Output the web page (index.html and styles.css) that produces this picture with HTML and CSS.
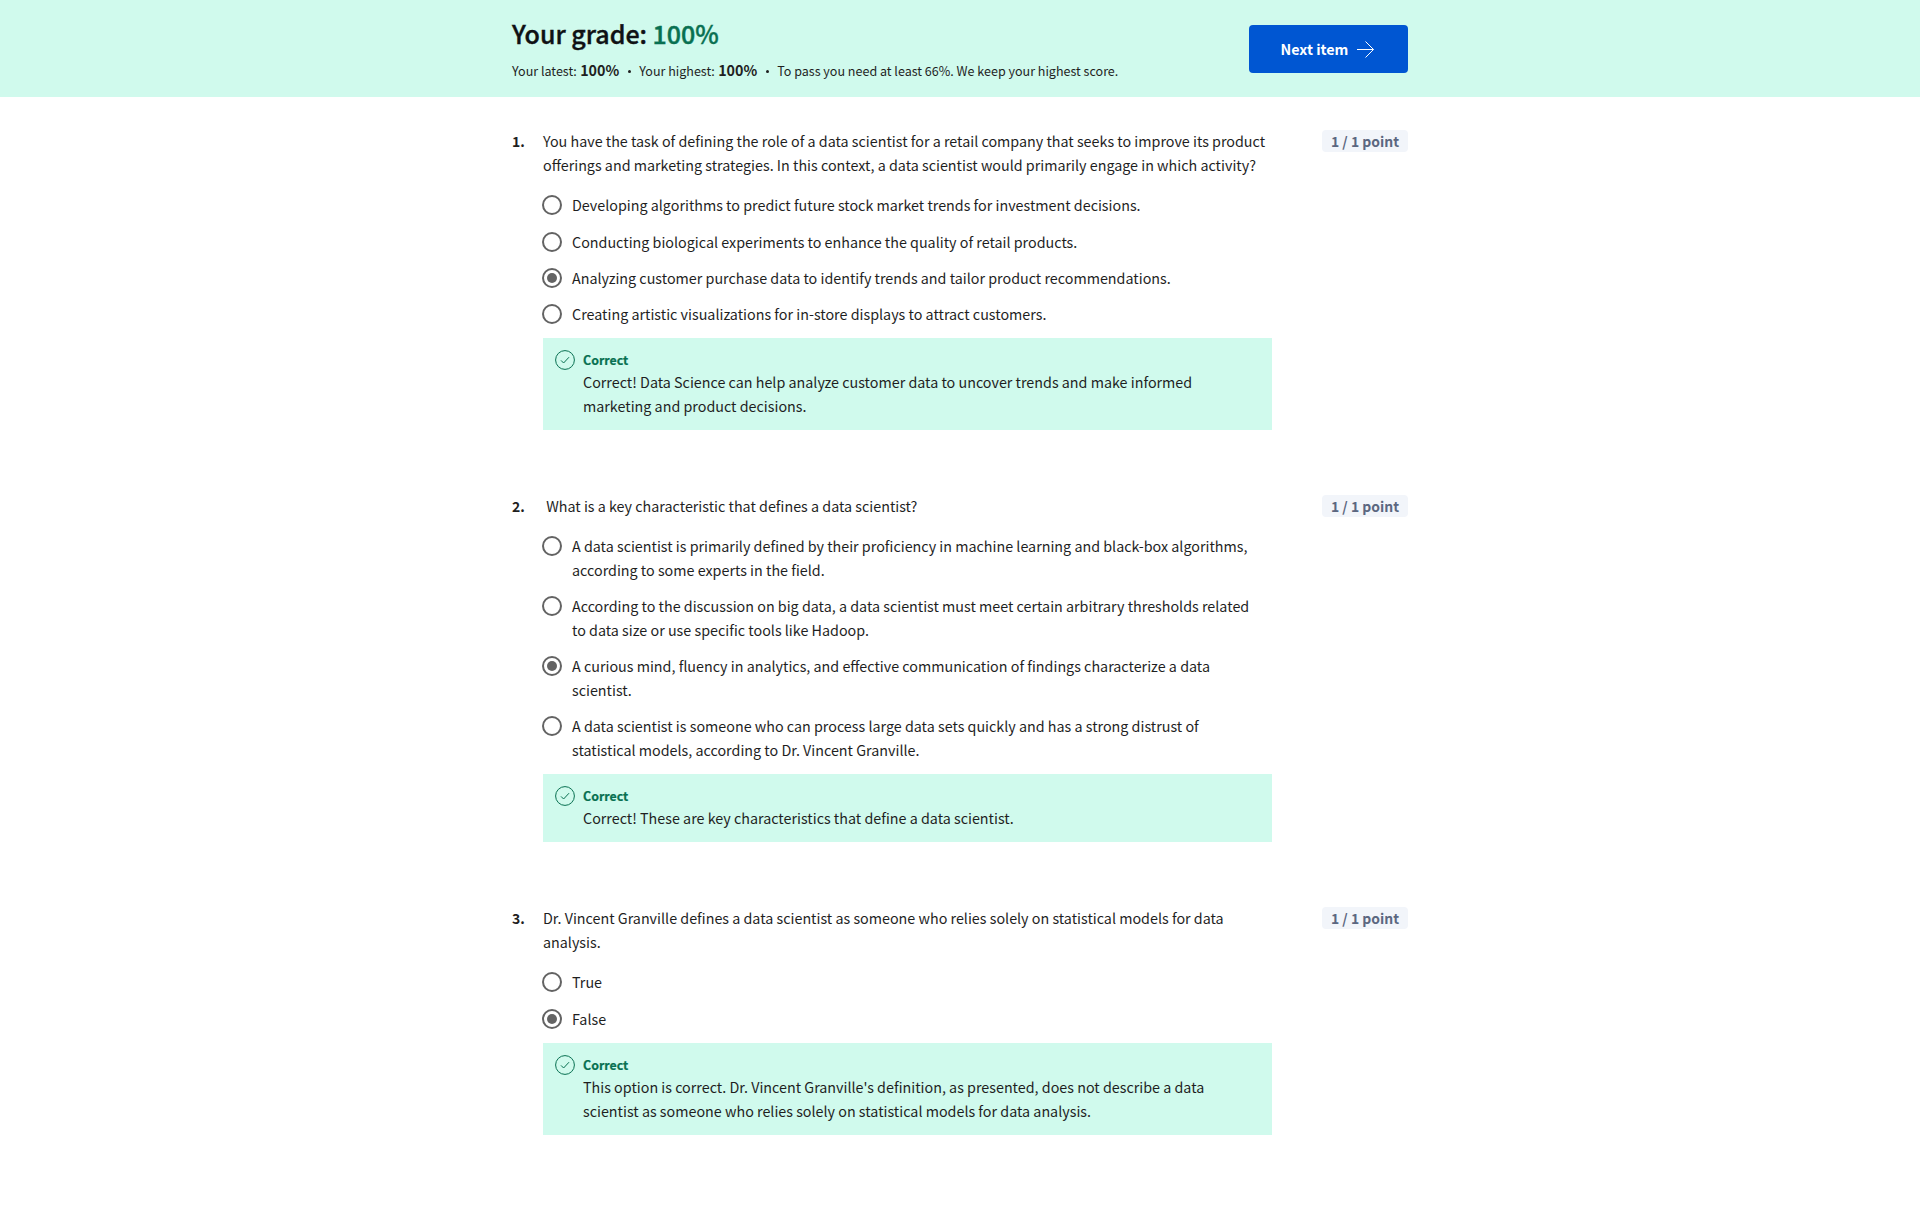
FILE: index.html
```
<!DOCTYPE html>
<html lang="en">
<head>
<meta charset="utf-8">
<title>Quiz results</title>
<link rel="stylesheet" href="styles.css">
</head>
<body>
<svg class="defs" aria-hidden="true">
  <symbol id="check" viewBox="0 0 20 20">
    <circle cx="10" cy="10" r="9.4"/>
    <path d="M6 10.4 8.6 13 14 7.2"/>
  </symbol>
</svg>
<header class="banner">
  <div class="banner-inner">
    <div>
      <h1 class="grade">Your grade: <span class="grade-value">100%</span></h1>
      <p class="summary">
        <span>Your latest: <b>100%</b></span><i class="dot"></i>
        <span>Your highest: <b>100%</b></span><i class="dot"></i>
        <span>To pass you need at least 66%. We keep your highest score.</span>
      </p>
    </div>
    <button class="next">Next item
      <svg class="arrow" viewBox="0 0 17 17"><path d="M0 8.5h16.5M8.5 .5l8 8-8 8"/></svg>
    </button>
  </div>
</header>
<main class="questions">
  <section class="question">
    <div class="number">1.</div>
    <div class="content">
      <p class="prompt">You have the task of defining the role of a data scientist for a retail company that seeks to improve its product<br>offerings and marketing strategies. In this context, a data scientist would primarily engage in which activity?</p>
      <ul class="options">
        <li class="option lead"><span class="radio"></span><span>Developing algorithms to predict future stock market trends for investment decisions.</span></li>
        <li class="option"><span class="radio"></span><span>Conducting biological experiments to enhance the quality of retail products.</span></li>
        <li class="option"><span class="radio selected"></span><span>Analyzing customer purchase data to identify trends and tailor product recommendations.</span></li>
        <li class="option"><span class="radio"></span><span>Creating artistic visualizations for in-store displays to attract customers.</span></li>
      </ul>
      <div class="feedback">
        <svg class="check"><use href="#check"/></svg>
        <div>
          <h2 class="verdict">Correct</h2>
          <p>Correct! Data Science can help analyze customer data to uncover trends and make informed<br>marketing and product decisions.</p>
        </div>
      </div>
    </div>
    <div class="points">1 / 1 point</div>
  </section>
  <section class="question">
    <div class="number">2.</div>
    <div class="content">
      <p class="prompt">&nbsp;What is a key characteristic that defines a data scientist?</p>
      <ul class="options">
        <li class="option"><span class="radio"></span><span>A data scientist is primarily defined by their proficiency in machine learning and black-box algorithms,<br>according to some experts in the field.</span></li>
        <li class="option"><span class="radio"></span><span>According to the discussion on big data, a data scientist must meet certain arbitrary thresholds related<br>to data size or use specific tools like Hadoop.</span></li>
        <li class="option"><span class="radio selected"></span><span>A curious mind, fluency in analytics, and effective communication of findings characterize a data<br>scientist.</span></li>
        <li class="option"><span class="radio"></span><span>A data scientist is someone who can process large data sets quickly and has a strong distrust of<br>statistical models, according to Dr. Vincent Granville.</span></li>
      </ul>
      <div class="feedback">
        <svg class="check"><use href="#check"/></svg>
        <div>
          <h2 class="verdict">Correct</h2>
          <p>Correct! These are key characteristics that define a data scientist.</p>
        </div>
      </div>
    </div>
    <div class="points">1 / 1 point</div>
  </section>
  <section class="question">
    <div class="number">3.</div>
    <div class="content">
      <p class="prompt">Dr. Vincent Granville defines a data scientist as someone who relies solely on statistical models for data<br>analysis.</p>
      <ul class="options">
        <li class="option lead"><span class="radio"></span><span>True</span></li>
        <li class="option"><span class="radio selected"></span><span>False</span></li>
      </ul>
      <div class="feedback">
        <svg class="check"><use href="#check"/></svg>
        <div>
          <h2 class="verdict">Correct</h2>
          <p>This option is correct. Dr. Vincent Granville's definition, as presented, does not describe a data<br>scientist as someone who relies solely on statistical models for data analysis.</p>
        </div>
      </div>
    </div>
    <div class="points">1 / 1 point</div>
  </section>
</main>
</body>
</html>
```
FILE: styles.css
```
* { box-sizing: border-box; margin: 0; padding: 0; }
body {
  background: #fff;
  color: #1f1f1f;
  font: 14.32px/24px "Noto Sans CJK SC", "Noto Sans", sans-serif;
  white-space: nowrap;
}
.defs { display: none; }
.banner { height: 97px; background: #d0faed; }
.banner-inner {
  display: flex;
  justify-content: space-between;
  align-items: flex-start;
  width: 896px;
  margin: 0 auto;
  padding-top: 15px;
}
.grade { color: #0f1114; font-size: 25px; font-weight: 500; line-height: 36px; -webkit-text-stroke: 0.4px currentColor; }
.grade-value { color: #087051; }
.summary { display: flex; align-items: center; margin-top: 10px; font-size: 12.54px; line-height: 20px; }
.summary b { margin-left: 0.5px; font-size: 14.3px; font-weight: 700; line-height: 1; }
.dot { width: 3px; height: 3px; margin: 0 8.5px; border-radius: 50%; background: #1f1f1f; }
.next {
  display: flex;
  align-items: center;
  gap: 9px;
  width: 159px;
  height: 48px;
  margin-top: 10px;
  padding-left: 31.5px;
  border: 0;
  border-radius: 4px;
  background: #0056d2;
  color: #fff;
  font: 700 14.32px/24px "Noto Sans CJK SC", sans-serif;
}
.arrow { width: 17px; height: 17px; fill: none; stroke: #fff; stroke-width: 1; }
.questions { display: grid; row-gap: 64px; width: 896px; margin: 32px auto 0; }
.question { display: grid; grid-template-columns: 31px 729px auto; justify-content: start; align-items: start; }
.number { font-size: 14px; font-weight: 700; }
.points {
  width: 86px;
  height: 22px;
  margin: 1px 0 0 50px;
  border-radius: 4px;
  background: #f2f5fa;
  color: #5b6780;
  font-size: 13.95px;
  font-weight: 700;
  line-height: 22px;
  text-align: center;
}
.options { display: grid; row-gap: 12px; margin: 16px 0 12px; list-style: none; }
.option { display: flex; gap: 10px; align-items: flex-start; }
.lead { padding-bottom: 1px; }
.radio {
  display: grid;
  place-items: center;
  flex: none;
  width: 20px;
  height: 20px;
  margin: 2px 0 0 -1px;
  border: 2px solid #636363;
  border-radius: 50%;
}
.selected::after { content: ""; width: 10px; height: 10px; border-radius: 50%; background: #636363; }
.feedback { display: flex; gap: 8px; padding: 11px 12px 12px; background: #d0faed; }
.check { width: 20px; height: 20px; margin-top: 1px; fill: none; stroke: #087051; stroke-width: 1; }
.verdict { padding-top: 2px; color: #087051; font-size: 12.4px; font-weight: 700; line-height: 19px; -webkit-text-stroke: 0.2px currentColor; }
```
